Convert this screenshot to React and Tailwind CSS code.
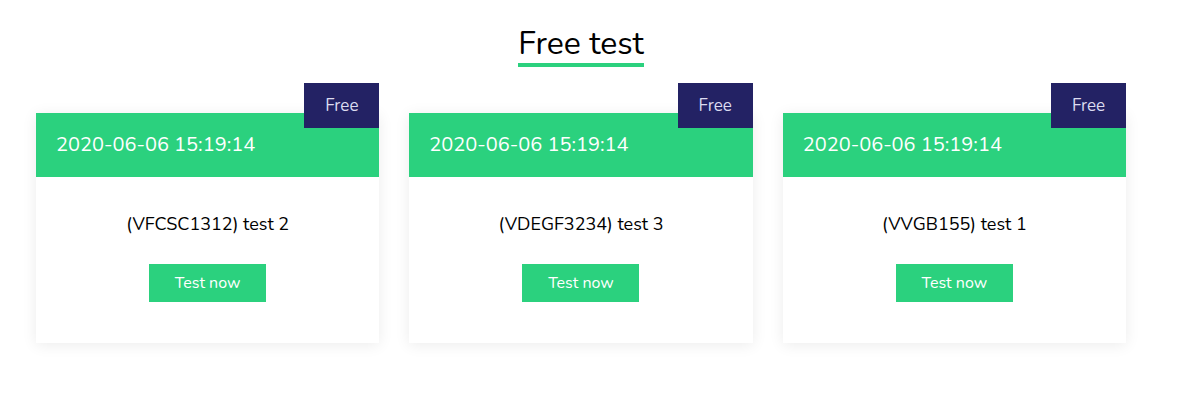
import React from 'react';

const tests = [
    { date: '2020-06-06 15:19:14', name: '(VFCSC1312) test 2' },
    { date: '2020-06-06 15:19:14', name: '(VDEGF3234) test 3' },
    { date: '2020-06-06 15:19:14', name: '(VVGB155) test 1' },
];

const TestCard = ({ date, name }) => (
    <div className="relative pt-[30px]">
        <div className="absolute right-0 top-0 w-[75px] h-[45px] bg-[#232264] text-[#dcdcf0] text-[17px] flex items-center justify-center">
            Free
        </div>
        <div className="bg-white shadow-[0_2px_14px_rgba(0,0,0,0.08)]">
            <div className="h-[64px] bg-[#2bd17e] text-white text-[20px] flex items-center px-5">
                {date}
            </div>
            <div className="flex flex-col items-center pt-[35px] pb-[41px]">
                <p className="text-[18px] text-black leading-[24px]">{name}</p>
                <button className="mt-[28px] w-[117px] h-[38px] bg-[#2bd17e] text-white text-[16px]">
                    Test now
                </button>
            </div>
        </div>
    </div>
);

const App = () => {
    return (
        <div className="min-h-[403px] bg-white font-['Nunito','Lato',sans-serif] pl-[36px]">
            <div className="w-[1090px] pt-[26px]">
                <div className="flex justify-center">
                    <h1 className="text-[32px] leading-[36px] text-black border-b-4 border-[#2bd17e] pb-[1px]">
                        Free test
                    </h1>
                </div>
                <div className="grid grid-cols-3 gap-[30px] mt-[16px]">
                    {tests.map((t, i) => (
                        <TestCard key={i} {...t} />
                    ))}
                </div>
            </div>
        </div>
    );
};

export default App;
